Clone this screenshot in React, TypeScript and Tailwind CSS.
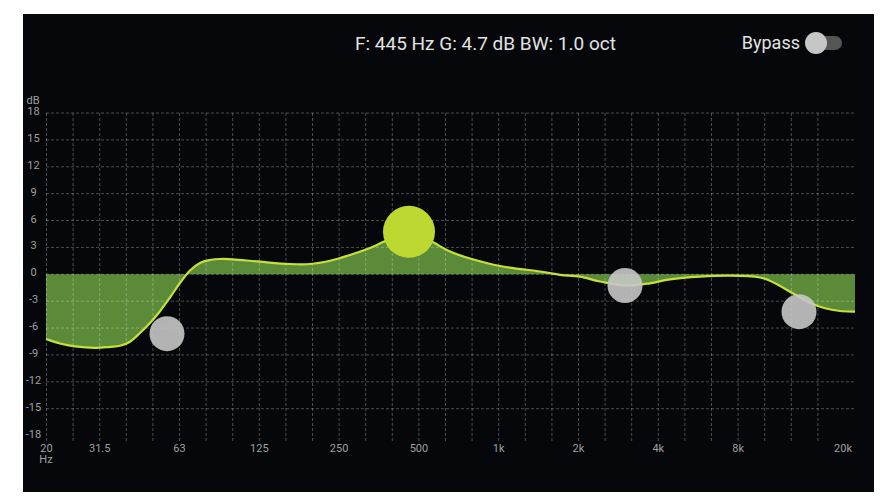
import React from 'react';

// grid geometry, in page pixels
const X0 = 46.5;
const STEP = 26.6;
const RIGHT = 855;
const ZERO_Y = 274.3;
const DB_PX = 8.96;
const yOf = (db: number) => ZERO_Y - db * DB_PX;

const dbTicks = [18, 15, 12, 9, 6, 3, 0, -3, -6, -9, -12, -15, -18];
const freqLabels: [string, number][] = [
  ['20', 0],
  ['31.5', 2],
  ['63', 5],
  ['125', 8],
  ['250', 11],
  ['500', 14],
  ['1k', 17],
  ['2k', 20],
  ['4k', 23],
  ['8k', 26],
];

// traced response curve
const curve: [number, number][] = [
  [46, 339], [60, 343.5], [75, 346.3], [95, 347.8], [110, 346.8], [120, 345.8],
  [130, 341.7], [140, 333], [150, 323], [160, 311.2], [170, 297.5], [180, 283],
  [190, 270.5], [200, 263], [210, 260], [220, 259], [233, 259.3], [260, 261.7],
  [290, 264], [310, 264], [330, 260.7], [350, 255], [370, 248], [383, 242],
  [396, 236], [409, 232.5], [422, 236], [435, 243.3], [450, 251.5], [470, 258.5],
  [500, 266], [540, 271.5], [560, 274.8], [580, 276.7], [600, 281.5], [625, 285.5],
  [650, 283.3], [670, 279.3], [700, 276.7], [730, 275.7], [760, 277.5], [775, 283.3],
  [790, 291.7], [810, 302.7], [825, 308.3], [840, 311], [855, 311.7],
];

function smoothPath(pts: [number, number][]) {
  let d = `M${pts[0][0]},${pts[0][1]}`;
  for (let i = 0; i < pts.length - 1; i++) {
    const p0 = pts[i - 1] || pts[i];
    const p1 = pts[i];
    const p2 = pts[i + 1];
    const p3 = pts[i + 2] || p2;
    const c1x = p1[0] + (p2[0] - p0[0]) / 6;
    const c1y = p1[1] + (p2[1] - p0[1]) / 6;
    const c2x = p2[0] - (p3[0] - p1[0]) / 6;
    const c2y = p2[1] - (p3[1] - p1[1]) / 6;
    d += ` C${c1x.toFixed(2)},${c1y.toFixed(2)} ${c2x.toFixed(2)},${c2y.toFixed(2)} ${p2[0]},${p2[1]}`;
  }
  return d;
}

function EqChart() {
  const line = smoothPath(curve);
  const fill = `${line} L${RIGHT},${ZERO_Y} L46,${ZERO_Y} Z`;
  const verticals = Array.from({ length: 30 }, (_, i) => X0 + i * STEP);

  return (
    <svg width={851} height={420} className="block" style={{ fontFamily: 'Roboto, "Liberation Sans", sans-serif' }}>
      <g transform="translate(-23,-72)">
        {/* response fill */}
        <path d={fill} fill="#5b8b39" />

        {/* grid */}
        <g stroke="#ffffff" strokeOpacity={0.28} strokeWidth={1} strokeDasharray="3 2">
          {dbTicks.slice(0, 12).map((db) => (
            <line key={db} x1={46} x2={RIGHT} y1={yOf(db)} y2={yOf(db)} />
          ))}
          {verticals.map((x) => (
            <line key={x} x1={x} x2={x} y1={113} y2={442} />
          ))}
        </g>

        {/* response line */}
        <path d={line} fill="none" stroke="#c6e03a" strokeWidth={2.2} />

        {/* band nodes */}
        <circle cx={167} cy={333.7} r={17.5} fill="#c6c6c6" fillOpacity={0.9} />
        <circle cx={625} cy={285.5} r={17.5} fill="#c6c6c6" fillOpacity={0.9} />
        <circle cx={799} cy={311.7} r={17.5} fill="#c6c6c6" fillOpacity={0.9} />
        <circle cx={409} cy={231.8} r={26} fill="#bed832" />

        {/* dB axis */}
        <g fill="#a0a0a0" fontSize={11} textAnchor="middle">
          <text x={33} y={104}>dB</text>
          {dbTicks.map((db) => (
            <text key={db} x={33.5} y={yOf(db) + 2}>
              {db}
            </text>
          ))}
        </g>

        {/* frequency axis */}
        <g fill="#a0a0a0" fontSize={11} textAnchor="middle">
          {freqLabels.map(([label, i]) => (
            <text key={label} x={X0 + i * STEP} y={452}>
              {label}
            </text>
          ))}
          <text x={843} y={452}>20k</text>
          <text x={46} y={463}>Hz</text>
        </g>
      </g>
    </svg>
  );
}

export default function App() {
  return (
    <div className="w-[890px] h-[503px] bg-white pt-[14px] pl-[23px]">
      <div className="w-[851px] h-[478px] bg-[#05070a] flex flex-col" style={{ fontFamily: 'Roboto, "Liberation Sans", sans-serif' }}>
        {/* Header */}
        <div className="h-[58px] flex items-center pr-[32px]">
          <span className="ml-[332px] text-[19px] text-[#e2e2e2] leading-none">
            F: 445 Hz G: 4.7 dB BW: 1.0 oct
          </span>
          <div className="ml-auto flex items-center gap-[5px]">
            <span className="text-[18px] text-[#e2e2e2] leading-none">Bypass</span>
            <div className="relative w-[37px] h-[22px]">
              <div className="absolute right-0 top-[4px] w-[34px] h-[14px] rounded-full bg-[#555555]" />
              <div className="absolute left-0 top-0 w-[22px] h-[22px] rounded-full bg-[#c6c6c6]" />
            </div>
          </div>
        </div>

        {/* Chart */}
        <EqChart />
      </div>
    </div>
  );
}
